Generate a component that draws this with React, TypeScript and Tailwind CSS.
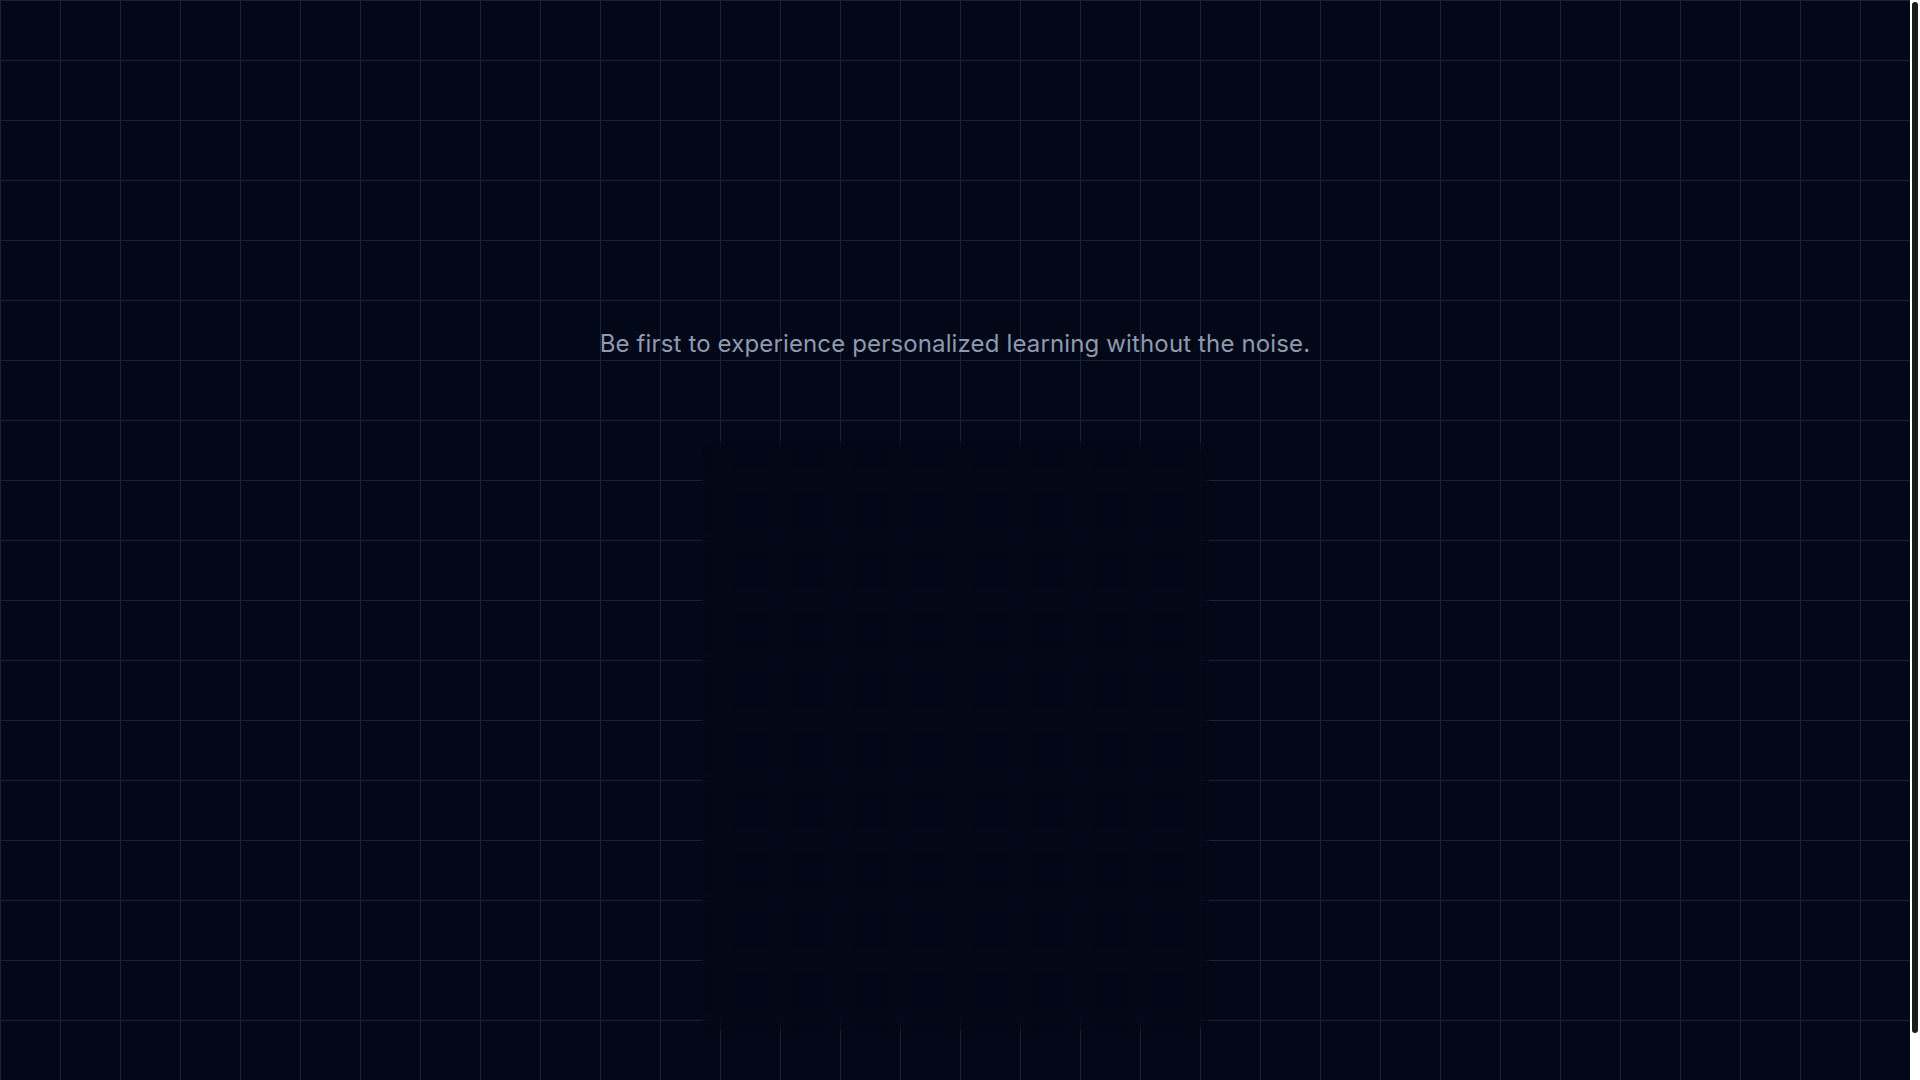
import React from 'react';

const App: React.FC = () => {
    return (
        <div className="flex h-screen w-full bg-[#020817]" style={{ fontFamily: 'Inter, "Noto Sans", sans-serif' }}>
            <main className="flex-1 overflow-y-auto [scrollbar-width:none]">
                <div className="min-h-[1132px] w-full bg-[linear-gradient(to_right,#1c2231_1px,transparent_1px),linear-gradient(to_bottom,#1c2231_1px,transparent_1px)] bg-[size:60px_60px]">
                    <section className="flex flex-col items-center pt-[328px] pb-[100px]">
                        <p className="text-2xl leading-8 tracking-[0.14px] text-[#8e9ab0]">
                            Be first to experience personalized learning without the noise.
                        </p>

                        {/* waitlist card (contents not yet shown) */}
                        <div className="mt-[81px] h-[590px] w-[508px] rounded-2xl bg-[#020817]/[0.3] backdrop-blur-sm" />
                    </section>
                </div>
            </main>

            {/* page scrollbar */}
            <aside className="w-[10px] shrink-0 bg-white px-[2px] pt-[2px]">
                <div className="h-[1031px] w-full rounded-full bg-[#1c1c1c]" />
            </aside>
        </div>
    );
};

export default App;
